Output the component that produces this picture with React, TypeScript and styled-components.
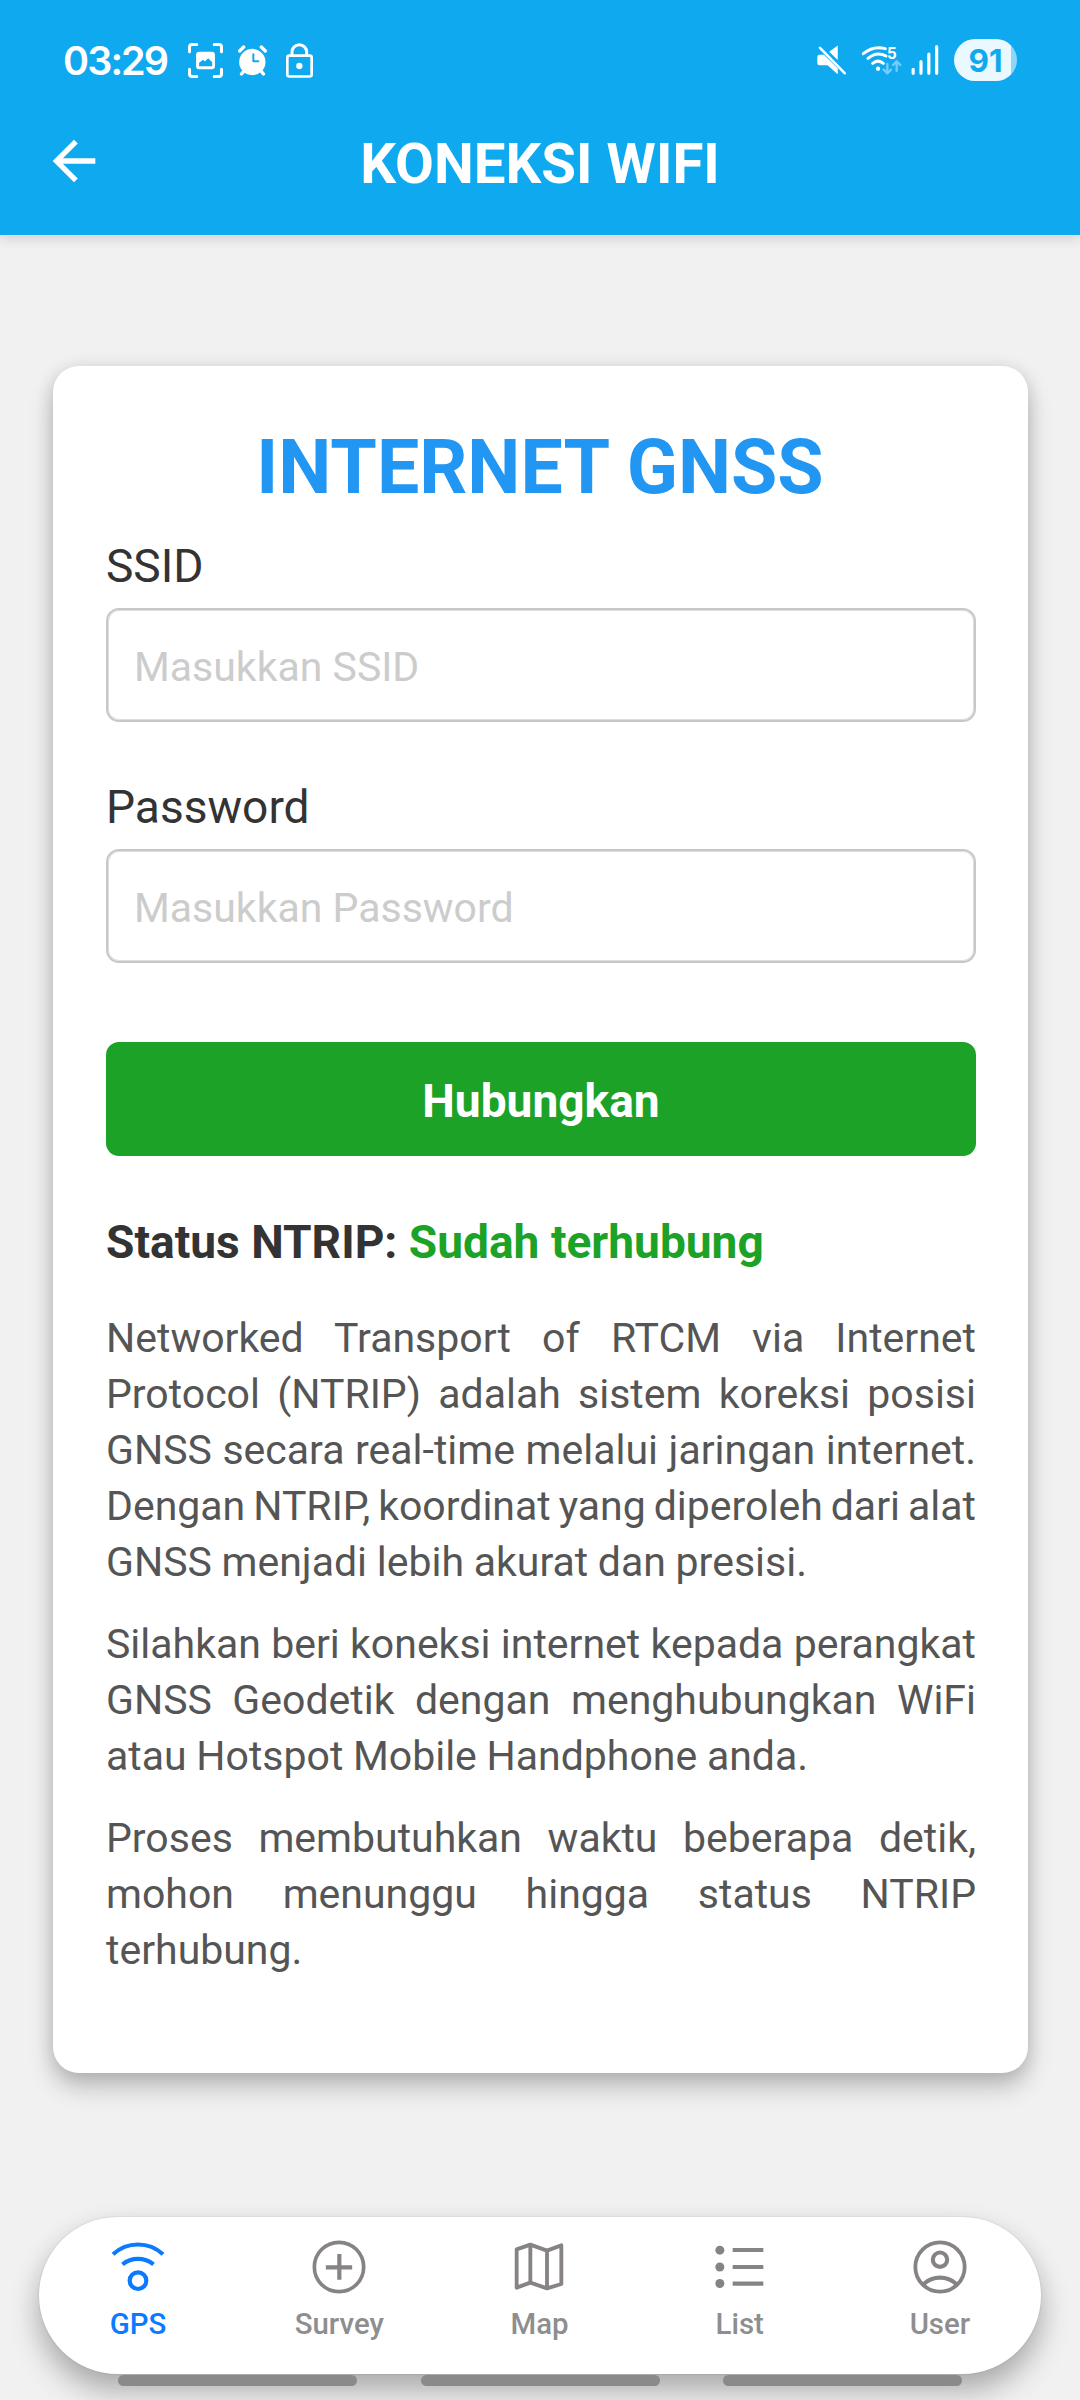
import React from 'react';
import styled, { createGlobalStyle } from 'styled-components';

const BLUE = '#0fa9f0';
const GREEN = '#1ba227';
const ICON_GREY = '#878382';

const GlobalStyle = createGlobalStyle`
  * { box-sizing: border-box; }
  body { margin: 0; background: #f1f1f1; font-family: Roboto, "Noto Sans", sans-serif; }
`;

const Screen = styled.div`
  display: flex;
  flex-direction: column;
  width: 1080px;
  height: 2400px;
  overflow: hidden;
  background: #f1f1f1;
`;

const Header = styled.header`
  flex: none;
  height: 235px;
  background: ${BLUE};
  box-shadow: 0 1px 0 #cfe6f1, 0 3px 12px rgba(0, 0, 0, 0.15);
`;

const StatusBar = styled.div`
  display: flex;
  align-items: center;
  justify-content: space-between;
  height: 120px;
  padding: 0 63px;
`;

const StatusGroup = styled.div`
  display: flex;
  align-items: center;
`;

const Clock = styled.span`
  width: 125px;
  padding-top: 1px;
  color: #fff;
  font: 640 39.5px/44px Inter, sans-serif;
  letter-spacing: -1.9px;
  white-space: nowrap;
`;

const StatusIcon = styled.svg<{ $after?: number }>`
  display: block;
  margin-right: ${(p) => p.$after ?? 0}px;
  overflow: visible;
  fill: none;
  stroke-linecap: round;
  stroke-linejoin: round;
`;

const Battery = styled.div`
  display: flex;
  align-items: center;
  justify-content: center;
  width: 63px;
  height: 42px;
  padding-top: 1px;
  border-radius: 21px;
  background: linear-gradient(90deg, #eaf8ff 57px, #8fd7fa 57px);
  color: ${BLUE};
  font: 650 31.5px/42px Inter, sans-serif;
`;

const TitleBar = styled.div`
  display: grid;
  grid-template-columns: 64px 1fr 64px;
  align-items: center;
  height: 84px;
  padding: 0 42px;
`;

const BackButton = styled.button`
  display: flex;
  padding: 0;
  border: 0;
  background: none;
  margin-bottom: 2px;
`;

const PageTitle = styled.h1`
  margin: 0;
  padding-top: 3px;
  color: #fff;
  font-size: 56.4px;
  line-height: 66px;
  font-weight: 700;
  text-align: center;
`;

const Content = styled.main`
  display: flex;
  flex-direction: column;
  flex: 1;
  padding: 131px 52px 0 53px;
`;

const Card = styled.section`
  display: flex;
  flex-direction: column;
  height: 1707px;
  padding: 53px 52px 0 53px;
  border-radius: 26px;
  background: #fff;
  box-shadow: 0 14px 24px rgba(0, 0, 0, 0.22), 0 2px 18px rgba(0, 0, 0, 0.11);
`;

const CardTitle = styled.h2`
  margin: 0 0 21px;
  padding-right: 2px;
  color: #2196f3;
  font-size: 75.2px;
  line-height: 96px;
  font-weight: 700;
  text-align: center;
`;

const Field = styled.label<{ $last?: boolean }>`
  display: flex;
  flex-direction: column;
  gap: 12px;
  margin-bottom: ${(p) => (p.$last ? 79 : 55)}px;
`;

const FieldLabel = styled.span`
  color: #333;
  font-size: 46.1px;
  line-height: 60px;
`;

const Input = styled.input`
  height: 114px;
  padding: 3px 24px 0 26px;
  border: 2px solid #c8c8c8;
  border-radius: 13px;
  outline: none;
  background: #fff;
  box-shadow: inset 0 0 0 1px #dedede;
  color: #333;
  font: 400 41px/48px Roboto, sans-serif;
  &::placeholder { color: #ccc; opacity: 1; }
`;

const ConnectButton = styled.button`
  flex: none;
  height: 114px;
  padding: 4px 0 0;
  border: 0;
  border-radius: 13px;
  background: ${GREEN};
  color: #fff;
  font: 700 46.1px/54px Roboto, sans-serif;
`;

const Status = styled.p`
  margin: 56px 0 38px;
  color: #333;
  font-size: 46.1px;
  line-height: 60px;
  font-weight: 700;
`;

const Connected = styled.span`
  color: ${GREEN};
`;

const Paragraph = styled.p`
  margin: 0 0 26px;
  color: #555;
  font-size: 41px;
  line-height: 56px;
`;

const Line = styled.span<{ $last: boolean }>`
  display: block;
  text-align: justify;
  text-align-last: ${(p) => (p.$last ? 'left' : 'justify')};
  word-spacing: ${(p) => (p.$last ? -0.5 : -4)}px;
`;

const Footer = styled.footer`
  flex: none;
  display: flex;
  flex-direction: column;
  height: 183px;
  padding: 0 39px;
`;

const TabBar = styled.nav`
  display: grid;
  grid-template-columns: repeat(5, 1fr);
  height: 157px;
  padding: 10px 1px 0 0;
  border-radius: 79px;
  background: #fff;
  box-shadow: 0 18px 30px rgba(0, 0, 0, 0.25), 0 0 2px rgba(0, 0, 0, 0.14), 0 6px 26px rgba(0, 0, 0, 0.07);
`;

const Tab = styled.a<{ $active?: boolean }>`
  display: flex;
  flex-direction: column;
  align-items: center;
  padding-right: ${(p) => (p.$active ? 2 : 0)}px;
  color: ${(p) => (p.$active ? '#0a7aff' : '#8e8e8f')};
  font-size: 29.4px;
  line-height: 34px;
  font-weight: 500;
`;

const TabIcon = styled.svg<{ $active?: boolean }>`
  display: block;
  width: 80px;
  height: 80px;
  fill: none;
  stroke: ${(p) => (p.$active ? '#0a7aff' : ICON_GREY)};
  stroke-width: 12.5;
`;

const NavHandles = styled.div`
  position: relative;
  display: flex;
  justify-content: space-between;
  margin-top: 1px;
  padding: 0 79px;
`;

const Handle = styled.span`
  width: 239px;
  height: 11px;
  border-radius: 5.5px;
  background: #8a8a8a;
`;

const tabs = [
  {
    label: 'GPS',
    active: true,
    icon: (
      <>
        <path d="M45 82A110 110 0 0 1 195 82" />
        <path d="M73.5 112A74 74 0 0 1 166.5 112" />
        <circle cx="120" cy="161" r="25" />
      </>
    ),
  },
  {
    label: 'Survey',
    icon: (
      <>
        <circle cx="120" cy="120" r="74" strokeWidth="11" />
        <path d="M80.5 121H159.5M121 81V158" />
      </>
    ),
  },
  {
    label: 'Map',
    icon: (
      <path
        d="M53 67L94 53L144 71L187 55V171L144 184L94 167L53 182ZM94 53V167M144 71V184"
        strokeWidth="11.5"
        strokeLinejoin="round"
      />
    ),
  },
  {
    label: 'List',
    icon: (
      <>
        <path d="M98 69H190M98 120H190M98 170H190" />
        <g fill={ICON_GREY} stroke="none">
          <circle cx="59.5" cy="69.5" r="13.5" />
          <circle cx="59.5" cy="120" r="13.5" />
          <circle cx="59.5" cy="169.5" r="13.5" />
        </g>
      </>
    ),
  },
  {
    label: 'User',
    icon: (
      <>
        <circle cx="120" cy="120" r="74" strokeWidth="11.5" />
        <circle cx="120" cy="98" r="21.5" />
        <path d="M71 171A73 73 0 0 1 169 171" />
      </>
    ),
  },
];

const paragraphs = [
  [
    'Networked Transport of RTCM via Internet',
    'Protocol (NTRIP) adalah sistem koreksi posisi',
    'GNSS secara real-time melalui jaringan internet.',
    'Dengan NTRIP, koordinat yang diperoleh dari alat',
    'GNSS menjadi lebih akurat dan presisi.',
  ],
  [
    'Silahkan beri koneksi internet kepada perangkat',
    'GNSS Geodetik dengan menghubungkan WiFi',
    'atau Hotspot Mobile Handphone anda.',
  ],
  ['Proses membutuhkan waktu beberapa detik,', 'mohon menunggu hingga status NTRIP', 'terhubung.'],
];

export default function App() {
  return (
    <>
      <GlobalStyle />
      <Screen>
        <Header>
          <StatusBar>
            <StatusGroup>
              <Clock>03:29</Clock>
              <StatusIcon $after={15} width="35" height="35" viewBox="444 72 104 104">
                <path
                  d="M470 76.5H456Q448.5 76.5 448.5 84V98M522 76.5H536Q543.5 76.5 543.5 84V98M543.5 150V164Q543.5 171.5 536 171.5H522M470 171.5H456Q448.5 171.5 448.5 164V150"
                  stroke="#fff"
                  strokeWidth="9"
                />
                <rect x="468" y="98" width="56" height="52" rx="9" fill="#fff" />
                <path d="M477 141V131L489 122L494 127L504 117L516 129V141Z" fill={BLUE} />
              </StatusIcon>
              <StatusIcon $after={19} width="29" height="31" viewBox="594 78 87 93">
                <circle cx="637" cy="129" r="39.5" fill="#fff" />
                <path
                  d="M599 96L611 84M664 84L676 96M611 157L604.5 165M664 157L670.5 165"
                  stroke="#fff"
                  strokeWidth="10"
                />
                <path d="M640 106V127H655" stroke={BLUE} strokeWidth="6" />
              </StatusIcon>
              <StatusIcon width="27" height="35" viewBox="738 71 81 103">
                <rect x="742" y="108" width="73" height="62.5" rx="6" stroke="#fff" strokeWidth="8" />
                <path d="M756 106V97A22 22 0 0 1 800 97V106" stroke="#fff" strokeWidth="9" />
                <circle cx="778" cy="139" r="9.5" fill="#fff" />
              </StatusIcon>
            </StatusGroup>
            <StatusGroup>
              <StatusIcon $after={16} width="29" height="30" viewBox="81 76 88 90">
                <path
                  d="M118 96L144 77V121ZM88 105H102L144 147V164L113 137H88Q82 137 82 131V111Q82 105 88 105Z"
                  fill="#fff"
                />
                <path d="M90 84L165 161" stroke="#fff" strokeWidth="8" />
              </StatusIcon>
              <StatusIcon $after={9} width="40" height="30" viewBox="216 79 120 90">
                <path
                  d="M220 105Q250 80 286 90M234 119Q260 97 288 112M248 134Q264 121 280 134"
                  stroke="#fff"
                  strokeWidth="9"
                />
                <circle cx="264" cy="150" r="6.5" fill="#fff" />
                <text
                  x="291"
                  y="121"
                  fill="#fff"
                  fontFamily="Inter, sans-serif"
                  fontSize="49"
                  fontWeight="700"
                  textLength="29"
                  lengthAdjust="spacingAndGlyphs"
                >
                  5
                </text>
                <path
                  d="M292 136V163M281 153L292 164L303 153M320 157V129M309 139L320 128L331 139"
                  stroke="#76cbf8"
                  strokeWidth="7"
                />
              </StatusIcon>
              <StatusIcon $after={15} width="28" height="30" viewBox="363 76 84 90">
                <path d="M369.5 149V161M393 126V161M416.5 103V161M440 81V161" stroke="#fff" strokeWidth="9.5" />
              </StatusIcon>
              <Battery>91</Battery>
            </StatusGroup>
          </StatusBar>
          <TitleBar>
            <BackButton aria-label="Kembali">
              <svg width="64" height="64" viewBox="0 0 24 24" fill="#fff">
                <path d="M20 11H7.83l5.59-5.59L12 4l-8 8 8 8 1.41-1.41L7.83 13H20v-2z" />
              </svg>
            </BackButton>
            <PageTitle>KONEKSI WIFI</PageTitle>
          </TitleBar>
        </Header>

        <Content>
          <Card>
            <CardTitle>INTERNET GNSS</CardTitle>
            <Field>
              <FieldLabel>SSID</FieldLabel>
              <Input placeholder="Masukkan SSID" />
            </Field>
            <Field $last>
              <FieldLabel>Password</FieldLabel>
              <Input placeholder="Masukkan Password" />
            </Field>
            <ConnectButton>Hubungkan</ConnectButton>
            <Status>
              Status NTRIP: <Connected>Sudah terhubung</Connected>
            </Status>
            {paragraphs.map((lines) => (
              <Paragraph key={lines[0]}>
                {lines.map((line, i) => (
                  <Line key={line} $last={i === lines.length - 1}>
                    {line}
                  </Line>
                ))}
              </Paragraph>
            ))}
          </Card>
        </Content>

        <Footer>
          <TabBar>
            {tabs.map((tab) => (
              <Tab key={tab.label} $active={tab.active}>
                <TabIcon $active={tab.active} viewBox="0 0 240 240">
                  {tab.icon}
                </TabIcon>
                {tab.label}
              </Tab>
            ))}
          </TabBar>
          <NavHandles>
            <Handle />
            <Handle />
            <Handle />
          </NavHandles>
        </Footer>
      </Screen>
    </>
  );
}
